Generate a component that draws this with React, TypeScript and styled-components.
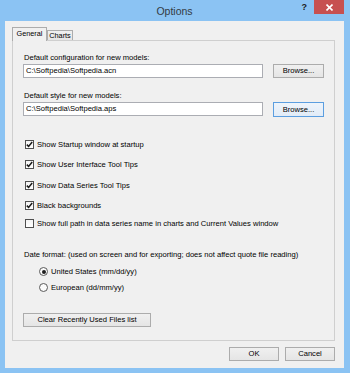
import styled, { createGlobalStyle } from "styled-components";

const GlobalStyle = createGlobalStyle`
  html, body {
    margin: 0;
    padding: 0;
  }
  body {
    font-family: "Liberation Sans", Arial, sans-serif;
    background: #8bc3f3;
  }
  * {
    box-sizing: border-box;
  }
`;

const Window = styled.div`
  width: 350px;
  height: 373px;
  padding: 0 6px 5px 5px;
  background: #8bc3f3;
  display: flex;
  flex-direction: column;
  overflow: hidden;
`;

const TitleBar = styled.div`
  height: 21px;
  flex: none;
  display: grid;
  grid-template-columns: 1fr auto 1fr;
  align-items: start;
`;

const Title = styled.div`
  grid-column: 2;
  font-size: 10.5px;
  line-height: 22px;
  color: #333a44;
`;

const Controls = styled.div`
  grid-column: 3;
  justify-self: end;
  display: flex;
  align-items: flex-start;
  gap: 7px;
`;

const Help = styled.span`
  margin-top: 3px;
  font-size: 9px;
  font-weight: bold;
  line-height: 9px;
  color: #1c1c1c;
`;

const CloseButton = styled.div`
  width: 30px;
  height: 14px;
  background: #c75050;
  display: flex;
  align-items: center;
  justify-content: center;
`;

const Client = styled.div`
  flex: 1;
  background: #f0f0f0;
  display: flex;
  flex-direction: column;
  padding: 6px 9px 7px 7px;
  font-size: 7.6px;
  color: #000;
`;

const TabStrip = styled.div`
  height: 14px;
  flex: none;
  display: flex;
  align-items: flex-end;
  margin-bottom: -1px;
  position: relative;
  z-index: 1;
`;

const Tab = styled.div<{ $active?: boolean }>`
  height: ${(p) => (p.$active ? "14px" : "10px")};
  margin-bottom: ${(p) => (p.$active ? "0" : "1px")};
  width: ${(p) => (p.$active ? "35px" : "26px")};
  border: 1px solid #acacac;
  border-bottom: none;
  background: ${(p) =>
    p.$active ? "#f0f0f0" : "linear-gradient(#f0f0f0, #e5e5e5)"};
  font-size: 7.3px;
  line-height: ${(p) => (p.$active ? "12px" : "9px")};
  text-align: center;
  margin-left: ${(p) => (p.$active ? "0" : "0")};
`;

const Panel = styled.div`
  flex: 1;
  border: 1px solid #cfcfcf;
  background: #f0f0f0;
  padding: 12px 10px 0 10px;
  display: flex;
  flex-direction: column;
`;

const Label = styled.div<{ $gap?: number }>`
  line-height: 10px;
  margin-top: ${(p) => p.$gap ?? 0}px;
  padding-left: 1px;
`;

const FieldRow = styled.div`
  height: 14px;
  margin-top: 1px;
  display: flex;
  gap: 10px;
`;

const TextBox = styled.div`
  flex: 1;
  background: #fff;
  border: 1px solid #abadb3;
  padding-left: 2px;
  line-height: 12px;
`;

const Button = styled.div<{ $width: number; $focused?: boolean }>`
  width: ${(p) => p.$width}px;
  height: ${(p) => (p.$focused ? "15px" : "14px")};
  flex: none;
  border: 1px solid ${(p) => (p.$focused ? "#5b9ee0" : "#acacac")};
  background: ${(p) =>
    p.$focused
      ? "linear-gradient(#eef4fb, #e2ecf7)"
      : "linear-gradient(#f0f0f0, #e5e5e5)"};
  display: flex;
  align-items: center;
  justify-content: center;
  line-height: 10px;
`;

const CheckList = styled.div`
  margin-top: 23px;
  margin-left: 2px;
  display: flex;
  flex-direction: column;
  gap: 10.5px;
`;

const OptionRow = styled.div<{ $pull?: number }>`
  height: 10px;
  display: flex;
  align-items: center;
  gap: 3px;
  margin-top: ${(p) => p.$pull ?? 0}px;
`;

const Box = styled.div`
  width: 9px;
  height: 9px;
  border: 1px solid #4f4f4f;
  background: linear-gradient(#f4f4f4, #ffffff);
  display: flex;
  align-items: center;
  justify-content: center;
`;

const RadioList = styled.div`
  margin-top: 7px;
  margin-left: 16px;
  display: flex;
  flex-direction: column;
  gap: 6px;
`;

const Radio = styled.div<{ $on?: boolean }>`
  width: 9px;
  height: 9px;
  border-radius: 50%;
  border: 1px solid #5a5a5a;
  background: #fbfbfb;
  display: flex;
  align-items: center;
  justify-content: center;
  &::after {
    content: "";
    width: 4px;
    height: 4px;
    border-radius: 50%;
    background: ${(p) => (p.$on ? "#1e1e1e" : "transparent")};
  }
`;

const ClearRow = styled.div`
  margin-top: 20px;
  display: flex;
`;

const Footer = styled.div`
  margin-top: 6px;
  display: flex;
  justify-content: flex-end;
  gap: 6px;
`;

function Check({ checked, label }: { checked: boolean; label: string }) {
  return (
    <>
      <Box>
        {checked && (
          <svg width="7" height="7" viewBox="0 0 7 7">
            <path
              d="M0.8 3.6 L2.6 5.4 L6.2 1"
              fill="none"
              stroke="#1a1a1a"
              strokeWidth="1.5"
            />
          </svg>
        )}
      </Box>
      <span>{label}</span>
    </>
  );
}

const checks = [
  { label: "Show Startup window at startup", checked: true },
  { label: "Show User Interface Tool Tips", checked: true },
  { label: "Show Data Series Tool Tips", checked: true },
  { label: "Black backgrounds", checked: true },
  {
    label:
      "Show full path in data series name in charts and Current Values window",
    checked: false,
  },
];

export default function App() {
  return (
    <>
      <GlobalStyle />
      <Window>
        <TitleBar>
          <Title>Options</Title>
          <Controls>
            <Help>?</Help>
            <CloseButton>
              <svg width="7" height="7" viewBox="0 0 7 7">
                <path
                  d="M0.5 0.5 L6.5 6.5 M6.5 0.5 L0.5 6.5"
                  stroke="#fff"
                  strokeWidth="1.6"
                />
              </svg>
            </CloseButton>
          </Controls>
        </TitleBar>

        <Client>
          <TabStrip>
            <Tab $active>General</Tab>
            <Tab>Charts</Tab>
          </TabStrip>

          <Panel>
            <Label>Default configuration for new models:</Label>
            <FieldRow>
              <TextBox>C:\Softpedia\Softpedia.acn</TextBox>
              <Button $width={51}>Browse...</Button>
            </FieldRow>

            <Label $gap={13}>Default style for new models:</Label>
            <FieldRow>
              <TextBox>C:\Softpedia\Softpedia.aps</TextBox>
              <Button $width={51} $focused>
                Browse...
              </Button>
            </FieldRow>

            <CheckList>
              {checks.map((c, i) => (
                <OptionRow key={c.label} $pull={i === 4 ? -2.5 : 0}>
                  <Check checked={c.checked} label={c.label} />
                </OptionRow>
              ))}
            </CheckList>

            <Label $gap={21}>
              Date format: (used on screen and for exporting; does not affect
              quote file reading)
            </Label>
            <RadioList>
              <OptionRow>
                <Radio $on />
                <span>United States (mm/dd/yy)</span>
              </OptionRow>
              <OptionRow>
                <Radio />
                <span>European (dd/mm/yy)</span>
              </OptionRow>
            </RadioList>

            <ClearRow>
              <Button $width={128}>Clear Recently Used Files list</Button>
            </ClearRow>
          </Panel>

          <Footer>
            <Button $width={50}>OK</Button>
            <Button $width={50}>Cancel</Button>
          </Footer>
        </Client>
      </Window>
    </>
  );
}
